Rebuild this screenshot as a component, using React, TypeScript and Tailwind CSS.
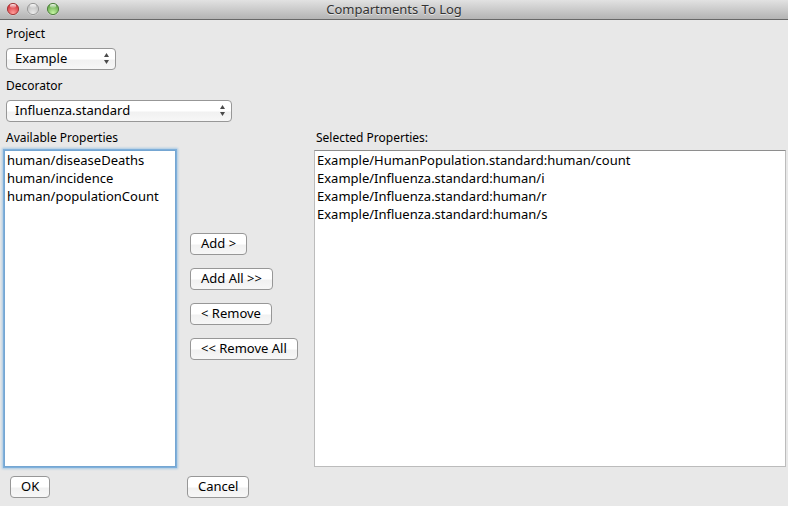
import type { ReactNode } from 'react';

const available = ['human/diseaseDeaths', 'human/incidence', 'human/populationCount'];

const selected = [
  'Example/HumanPopulation.standard:human/count',
  'Example/Influenza.standard:human/i',
  'Example/Influenza.standard:human/r',
  'Example/Influenza.standard:human/s',
];

function PushButton({ children }: { children: ReactNode }) {
  return (
    <button
      type="button"
      className="flex h-[22px] items-center justify-center rounded-[4px] border border-[#979797] bg-linear-to-b from-white from-50% via-[#f1f1f1] via-55% to-[#f7f7f7] px-2.5 pb-0.5 text-[13px] leading-[18px] whitespace-nowrap"
    >
      {children}
    </button>
  );
}

function PopUp({ id, label, value, width }: { id: string; label: string; value: string; width: string }) {
  return (
    <div>
      <label htmlFor={id} className="flex h-7 items-center text-[12px]">
        {label}
      </label>
      <div className={`relative h-6 ${width}`}>
        <select
          id={id}
          className="block h-[22px] w-full appearance-none rounded-[4px] border border-[#979797] bg-linear-to-b from-white from-50% via-[#f1f1f1] via-55% to-[#f7f7f7] pr-5 pb-0.5 pl-2 text-[13px] leading-[18px]"
        >
          <option>{value}</option>
        </select>
        <svg viewBox="0 0 5 11" className="pointer-events-none absolute top-[5px] right-[7px] h-[11px] w-[5px] fill-[#4a4a4a]" aria-hidden="true">
          <path d="M0 4 L2.5 0 L5 4Z M0 7 L2.5 11 L5 7Z" />
        </svg>
      </div>
    </div>
  );
}

function ItemList({ id, items, look }: { id: string; items: string[]; look: string }) {
  return (
    <select id={id} multiple className={`w-full flex-1 overflow-hidden border bg-white text-[13px] ${look}`}>
      {items.map((item) => (
        <option key={item} className="h-[18px] min-h-0 px-0.5 pt-0 pb-0.5 leading-4">
          {item}
        </option>
      ))}
    </select>
  );
}

function TrafficLight({ id, rim, dark, light }: { id: string; rim: string; dark: string; light: string }) {
  return (
    <svg viewBox="0 0 14 14" className="size-3.5">
      <defs>
        <radialGradient id={id} cx="50%" cy="85%" r="75%">
          <stop offset="0" stopColor={light} />
          <stop offset="1" stopColor={dark} />
        </radialGradient>
        <linearGradient id={`${id}-shine`} x1="0" y1="0" x2="0" y2="1">
          <stop offset="0" stopColor="#fff" stopOpacity="0.95" />
          <stop offset="1" stopColor="#fff" stopOpacity="0.1" />
        </linearGradient>
      </defs>
      <circle cx="7" cy="7.6" r="6" fill="#fff" opacity="0.5" />
      <circle cx="7" cy="7" r="5.6" fill={`url(#${id})`} stroke={rim} strokeWidth="1" />
      <ellipse cx="7" cy="4" rx="3.2" ry="2" fill={`url(#${id}-shine)`} />
    </svg>
  );
}

export default function App() {
  return (
    <div className="flex min-h-screen flex-col bg-[#e8e8e8] font-['Lucida_Grande','Noto_Sans',sans-serif] text-black">
      <header className="grid h-5 grid-cols-[1fr_auto_1fr] items-start border-b border-[#686868] bg-linear-to-b from-[#e2e2e2] to-[#b4b4b4]">
        <div className="flex gap-1.5 pt-0.5 pl-1.5">
          <TrafficLight id="close" rim="#a13a3a" dark="#d3313a" light="#ff9c98" />
          <TrafficLight id="minimise" rim="#999999" dark="#bdbdbd" light="#e9e9e9" />
          <TrafficLight id="zoom" rim="#508040" dark="#5fa444" light="#c5f5a4" />
        </div>
        <h1 className="text-[13px] leading-[18px] text-[#333] [text-shadow:0_1px_0_#e4e4e4]">Compartments To Log</h1>
      </header>

      <main className="flex flex-1 flex-col">
        <div className="pl-1.5">
          <PopUp id="project" label="Project" value="Example" width="w-[110px]" />
          <PopUp id="decorator" label="Decorator" value="Influenza.standard" width="w-[226px]" />
        </div>

        <div className="grid flex-1 grid-cols-[172px_110px_1fr] gap-x-3.5 pr-0.5 pl-1">
          <div className="flex flex-col">
            <label htmlFor="available" className="flex h-[26px] items-center pt-0.5 pl-0.5 text-[12px]">
              Available Properties
            </label>
            <ItemList
              id="available"
              items={available}
              look="border-[#75a6d2] shadow-[0_0_0_1px_#7fb0db,0_0_2px_2px_#a9c9e4]"
            />
          </div>
          <div className="flex flex-col items-start justify-center gap-[13px] pt-0.5">
            <PushButton>Add &gt;</PushButton>
            <PushButton>Add All &gt;&gt;</PushButton>
            <PushButton>&lt; Remove</PushButton>
            <PushButton>&lt;&lt; Remove All</PushButton>
          </div>
          <div className="flex min-w-0 flex-col">
            <label htmlFor="selected" className="flex h-[26px] items-center pt-0.5 pl-0.5 text-[12px]">
              Selected Properties:
            </label>
            <ItemList id="selected" items={selected} look="border-[#bcbcbc] border-t-[#8e8e8e]" />
          </div>
        </div>

        <footer className="grid grid-cols-[177px_1fr] justify-items-start pt-[9px] pb-2 pl-2.5">
          <PushButton>OK</PushButton>
          <PushButton>Cancel</PushButton>
        </footer>
      </main>
    </div>
  );
}
